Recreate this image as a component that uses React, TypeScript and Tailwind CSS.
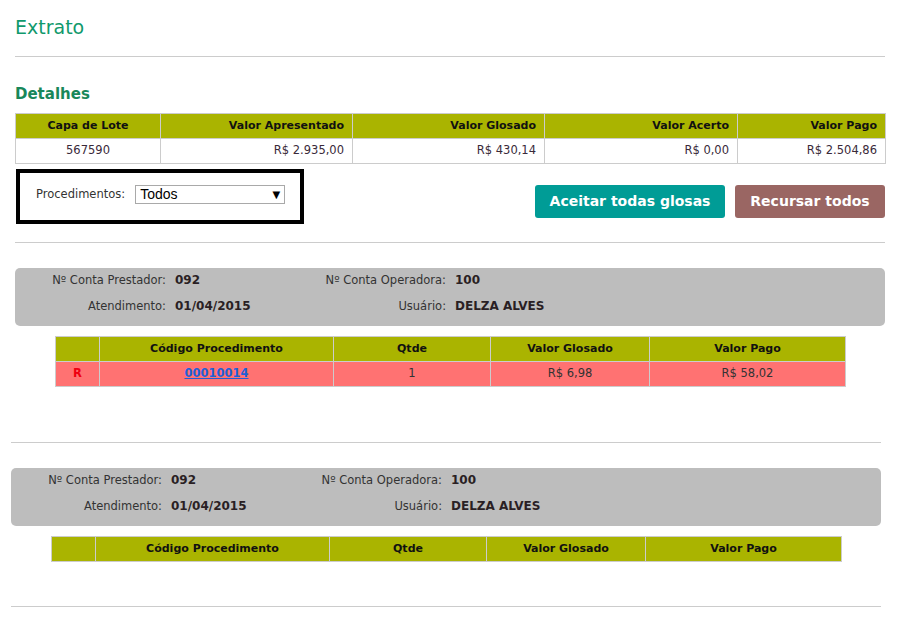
import React from "react";

const headCls = "border border-[#cccccc] bg-[#aab400] font-bold text-[11px] text-[#111] h-[25px] px-[8px]";
const cellCls = "border border-[#cccccc] h-[25px] px-[8px]";

interface Conta {
  prestador: string;
  operadora: string;
  atendimento: string;
  usuario: string;
  itens: { status: string; codigo: string; qtde: string; glosado: string; pago: string }[];
}

const contas: Conta[] = [
  {
    prestador: "092",
    operadora: "100",
    atendimento: "01/04/2015",
    usuario: "DELZA ALVES",
    itens: [{ status: "R", codigo: "00010014", qtde: "1", glosado: "R$ 6,98", pago: "R$ 58,02" }],
  },
  {
    prestador: "092",
    operadora: "100",
    atendimento: "01/04/2015",
    usuario: "DELZA ALVES",
    itens: [],
  },
];

const Info = ({ label, value }: { label: string; value: string }) => (
  <>
    <span className="w-[151px] text-right text-[#333]">{label}</span>
    <span className="w-[120px] ml-[9px] font-bold text-[12px] text-[#2a1f24]">{value}</span>
  </>
);

const ContaBlock = ({ conta }: { conta: Conta }) => (
  <div>
    <div className="bg-[#bdbdbd] rounded-[5px] pt-[4px] pb-[12px] flex flex-col gap-[10px] leading-[16px]">
      <div className="flex items-center">
        <Info label="Nº Conta Prestador:" value={conta.prestador} />
        <Info label="Nº Conta Operadora:" value={conta.operadora} />
      </div>
      <div className="flex items-center">
        <Info label="Atendimento:" value={conta.atendimento} />
        <Info label="Usuário:" value={conta.usuario} />
      </div>
    </div>
    <table className="mt-[10px] ml-[40px] w-[790px] border-collapse table-fixed text-center">
      <colgroup>
        <col className="w-[44px]" />
        <col className="w-[234px]" />
        <col className="w-[157px]" />
        <col className="w-[159px]" />
        <col className="w-[196px]" />
      </colgroup>
      <thead>
        <tr>
          <th className={headCls}></th>
          <th className={headCls}>Código Procedimento</th>
          <th className={headCls}>Qtde</th>
          <th className={headCls}>Valor Glosado</th>
          <th className={headCls}>Valor Pago</th>
        </tr>
      </thead>
      <tbody>
        {conta.itens.map((it) => (
          <tr key={it.codigo} className="bg-[#ff7272] text-[#333]">
            <td className={cellCls + " font-bold text-[11.5px] text-[#ee0011]"}>{it.status}</td>
            <td className={cellCls}>
              <a href="#" className="font-bold text-[11.5px] text-[#1f5fd6] underline">
                {it.codigo}
              </a>
            </td>
            <td className={cellCls}>{it.qtde}</td>
            <td className={cellCls}>{it.glosado}</td>
            <td className={cellCls}>{it.pago}</td>
          </tr>
        ))}
      </tbody>
    </table>
  </div>
);

export default function App() {
  return (
    <div className="bg-white min-h-[624px] text-[11.5px] text-[#333]" style={{ fontFamily: '"DejaVu Sans", Verdana, sans-serif' }}>
      <div className="pl-[15px] w-[885px]">
        <h1 className="text-[19px] leading-[24px] pt-[15px] text-[#10996c]">Extrato</h1>
        <div className="mt-[17px] border-t border-[#cccccc]" />
        <h2 className="mt-[27px] text-[15px] leading-[20px] font-bold text-[#18875a]">Detalhes</h2>
        <table className="mt-[9px] w-[870px] border-collapse table-fixed">
          <colgroup>
            <col className="w-[145px]" />
            <col className="w-[192px]" />
            <col className="w-[192px]" />
            <col className="w-[193px]" />
            <col className="w-[148px]" />
          </colgroup>
          <thead>
            <tr>
              <th className={headCls + " text-center"}>Capa de Lote</th>
              <th className={headCls + " text-right"}>Valor Apresentado</th>
              <th className={headCls + " text-right"}>Valor Glosado</th>
              <th className={headCls + " text-right"}>Valor Acerto</th>
              <th className={headCls + " text-right"}>Valor Pago</th>
            </tr>
          </thead>
          <tbody>
            <tr className="text-[#3a2a3a]">
              <td className={cellCls + " text-center"}>567590</td>
              <td className={cellCls + " text-right"}>R$ 2.935,00</td>
              <td className={cellCls + " text-right"}>R$ 430,14</td>
              <td className={cellCls + " text-right"}>R$ 0,00</td>
              <td className={cellCls + " text-right"}>R$ 2.504,86</td>
            </tr>
          </tbody>
        </table>

        <div className="flex items-start justify-between mt-[5px]">
          <div className="ml-[1px] w-[288px] h-[55px] border-4 border-black flex items-center pl-[16px] pb-[4px]">
            <span className="text-[#333]">Procedimentos:</span>
            <div className="ml-[10px] w-[150px] h-[19px] border border-[#a9a9a9] flex items-center justify-between px-[4px] bg-white">
              <span className="text-[14px] text-black" style={{ fontFamily: '"Liberation Sans", Arial, sans-serif' }}>
                Todos
              </span>
              <span className="text-[10px] text-black">▼</span>
            </div>
          </div>
          <div className="flex gap-[10px] mt-[16px]">
            <button className="w-[190px] h-[33px] rounded-[3px] bg-[#009c96] text-white font-bold text-[14px]">
              Aceitar todas glosas
            </button>
            <button className="w-[150px] h-[33px] rounded-[3px] bg-[#9a6663] text-white font-bold text-[14px]">
              Recursar todos
            </button>
          </div>
        </div>

        <div className="mt-[18px] border-t border-[#cccccc]" />
        <div className="mt-[25px] w-[870px]">
          <ContaBlock conta={contas[0]} />
        </div>
      </div>

      <div className="pl-[11px] w-[881px]">
        <div className="mt-[55px] border-t border-[#cccccc]" />
        <div className="mt-[25px] w-[870px]">
          <ContaBlock conta={contas[1]} />
        </div>
        <div className="mt-[44px] border-t border-[#cccccc]" />
      </div>
    </div>
  );
}
